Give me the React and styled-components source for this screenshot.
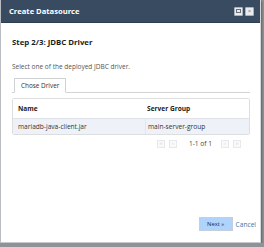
import React from 'react'
import styled, { createGlobalStyle } from 'styled-components'

const Global = createGlobalStyle`
  html, body {
    margin: 0;
    padding: 0;
    background: #8f9296;
    font-family: "Open Sans", "Liberation Sans", sans-serif;
  }
`

const Dialog = styled.div`
  width: 259px;
  height: 242px;
  background: #fff;
  border-left: 1px solid #b9bcc0;
  border-bottom: 1px solid #c6c8cb;
  border-right: 1px solid #d4d6d8;
  display: flex;
  flex-direction: column;
  box-shadow: 1px 1px 2px rgba(0, 0, 0, 0.35);
`

const TitleBar = styled.div`
  height: 22px;
  background: #394b61;
  display: flex;
  align-items: center;
  padding: 0 6px 0 8px;
  border-bottom: 1px solid #2e3d4f;
`

const Title = styled.div`
  flex: 1;
  color: #fff;
  font-size: 7.6px;
  font-weight: 700;
`

const WinButton = styled.div`
  width: 7px;
  height: 7px;
  margin-left: 2px;
  background: #e9ecef;
  border: 1px solid #a9b1bb;
  border-radius: 1px;
  display: flex;
  align-items: center;
  justify-content: center;
  color: #67707a;
  font-size: 6px;
  line-height: 1;
`

const Content = styled.div`
  flex: 1;
  display: flex;
  flex-direction: column;
  padding: 0 10px 0 11px;
`

const Step = styled.div`
  margin-top: 14px;
  font-size: 7.8px;
  font-weight: 700;
  color: #1c1c1c;
`

const Hint = styled.div`
  margin-top: 15px;
  font-size: 6.5px;
  color: #555;
`

const Tabs = styled.div`
  margin-top: 7px;
  display: flex;
  border-bottom: 1px solid #d2d4d6;
  padding-left: 2px;
`

const Tab = styled.div`
  height: 13px;
  padding: 0 6px;
  border: 1px solid #cfd2d5;
  border-bottom: 1px solid #fff;
  margin-bottom: -1px;
  background: #fff;
  display: flex;
  align-items: center;
  font-size: 6.4px;
  color: #333;
`

const Table = styled.div`
  margin-top: 5px;
  border: 1px solid #dcdee0;
  border-radius: 2px;
  display: grid;
  grid-template-columns: 132px 1fr;
`

const Cell = styled.div`
  height: ${p => (p.$head ? 19 : 15)}px;
  display: flex;
  align-items: center;
  padding-left: ${p => (p.$second ? 2 : 5)}px;
  font-size: 6.6px;
  font-weight: ${p => (p.$head ? 700 : 400)};
  color: ${p => (p.$head ? '#222' : '#333')};
  background: ${p => (p.$head ? '#fff' : '#eef2f8')};
  border-top: ${p => (p.$head ? 'none' : '1px solid #dfe3e8')};
  border-left: ${p => (p.$second && !p.$head ? '1px solid #e3e6ea' : 'none')};
`

const Pager = styled.div`
  margin-top: 4px;
  display: flex;
  justify-content: flex-end;
  align-items: center;
  padding-right: 9px;
  gap: 4px;
`

const PageButton = styled.div`
  width: 6px;
  height: 6px;
  border: 1px solid #e6e8ea;
  background: #f8f9fa;
  display: flex;
  align-items: center;
  justify-content: center;
  color: #d0d3d6;
  font-size: 5px;
  line-height: 1;
`

const PageInfo = styled.div`
  font-size: 6.6px;
  color: #444;
  margin: 0 5px 0 8px;
`

const Footer = styled.div`
  margin-top: auto;
  display: flex;
  justify-content: flex-end;
  align-items: center;
  padding: 0 2px 11px 0;
  margin-right: -8px;
  gap: 3px;
`

const NextButton = styled.div`
  width: 32px;
  height: 12px;
  background: #b0d3fb;
  border: 1px solid #c3cfdc;
  display: flex;
  align-items: center;
  justify-content: center;
  font-size: 5.8px;
  color: #1b2733;
`

const CancelLink = styled.div`
  font-size: 6.6px;
  color: #3f72a8;
`

const App = () => {
  return (
    <>
      <Global />
      <Dialog>
        <TitleBar>
          <Title>Create Datasource</Title>
          <WinButton>
            <svg width="5" height="4" viewBox="0 0 5 4">
              <rect x="0.5" y="0.5" width="4" height="3" fill="none" stroke="#67707a" strokeWidth="1" />
            </svg>
          </WinButton>
          <WinButton>×</WinButton>
        </TitleBar>
        <Content>
          <Step>Step 2/3: JDBC Driver</Step>
          <Hint>Select one of the deployed JDBC driver.</Hint>
          <Tabs>
            <Tab>Chose Driver</Tab>
          </Tabs>
          <Table>
            <Cell $head>Name</Cell>
            <Cell $head $second>Server Group</Cell>
            <Cell>mariadb-java-client.jar</Cell>
            <Cell $second>main-server-group</Cell>
          </Table>
          <Pager>
            <PageButton>«</PageButton>
            <PageButton>‹</PageButton>
            <PageInfo>1-1 of 1</PageInfo>
            <PageButton>›</PageButton>
            <PageButton>»</PageButton>
          </Pager>
          <Footer>
            <NextButton>Next »</NextButton>
            <CancelLink>Cancel</CancelLink>
          </Footer>
        </Content>
      </Dialog>
    </>
  )
}

export default App
